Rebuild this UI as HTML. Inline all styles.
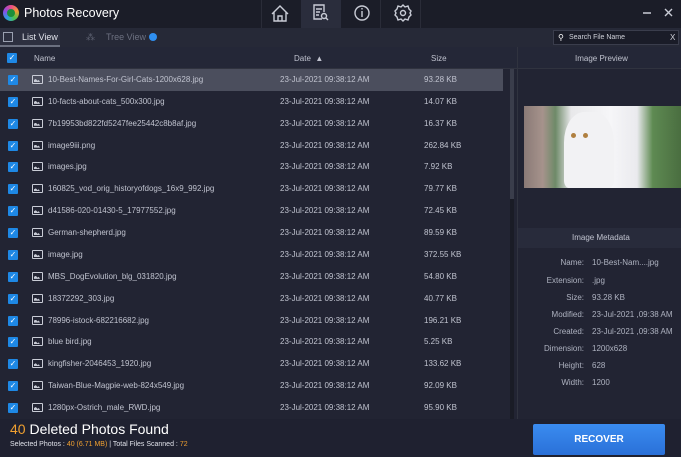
<!DOCTYPE html><html><head><style>
*{margin:0;padding:0;box-sizing:border-box}
body{width:681px;height:457px;overflow:hidden;background:#222433;font-family:"Liberation Sans",sans-serif;font-size:8px;color:#b9bcc8;position:relative}
.a{position:absolute}
.cb{position:absolute;width:10px;height:10px;background:#1e88e5;border-radius:1px;color:#fff;font-size:8px;line-height:10px;text-align:center}
.ic{position:absolute;width:11px;height:9px;border:1.3px solid #c9ccd6;border-radius:1px}
.ic:after{content:"";position:absolute;left:1px;bottom:1px;width:6px;height:3px;background:#c9ccd6;clip-path:polygon(0 100%,0 30%,30% 0,60% 60%,80% 30%,100% 100%)}
.row{position:absolute;left:0;width:505px;height:22px;line-height:22px}
.ml{position:absolute;width:84px;text-align:right;left:500px;color:#aeb2c0}
.mv{position:absolute;left:592px;color:#aeb2c0}
</style></head><body>
<div class="a" style="left:0;top:0;width:681px;height:28px;background:#1b1d28"></div>
<div class="a" style="left:3px;top:5px;width:16px;height:16px;border-radius:50%;background:conic-gradient(#e84a8a,#f39c33,#4cc44c,#2aa0e0,#8a4ce8,#e84a8a)"></div>
<div class="a" style="left:7px;top:9px;width:8px;height:8px;border-radius:50%;background:#1b8f3a"></div>
<div class="a" style="left:24px;top:6px;font-size:12.5px;color:#fff">Photos Recovery</div>
<div class="a" style="left:261px;top:0;width:40px;height:28px;border-left:1px solid #2a2c38"></div>
<div class="a" style="left:301px;top:0;width:40px;height:28px;background:#2a2d3c"></div>
<div class="a" style="left:341px;top:0;width:40px;height:28px;border-right:1px solid #2a2c38"></div>
<div class="a" style="left:381px;top:0;width:40px;height:28px;border-right:1px solid #2a2c38"></div>
<svg class="a" style="left:0;top:0" width="681" height="28" fill="none" stroke="#c9ccd6" stroke-width="1.4">
<path d="M272 14 L280 6 L288 14 M274 12 V21 H286 V12 M278 21 V16 H282 V21"/>
<path d="M322 19 H314 V5 H324 V12 M316 9 H322 M316 12 H320 M316 15 H319"/><circle cx="324" cy="16" r="2.5"/><path d="M326 18 L328 20"/>
<circle cx="362" cy="13" r="7"/><path d="M362 11 V17 M362 8 V9.5"/>
<circle cx="403" cy="13" r="2.5"/><path d="M403 5 L405 7 L408 6 L409 9 L411 11 L410 13 L411 15 L409 17 L408 20 L405 19 L403 21 L401 19 L398 20 L397 17 L395 15 L396 13 L395 11 L397 9 L398 6 L401 7 Z"/>
<path d="M643 13 H651 M665 9 L672 16 M672 9 L665 16"/>
</svg>
<div class="a" style="left:0;top:28px;width:681px;height:19px;background:#262937"></div>
<div class="a" style="left:0;top:28px;width:60px;height:19px;background:#2d3040;border-bottom:2px solid #6b7080"></div>
<div class="a" style="left:3px;top:32px;width:10px;height:10px;border:1.3px solid #9aa0b0"></div>
<div class="a" style="left:22px;top:32px;font-size:9px;color:#e0e2ea">List View</div>
<div class="a" style="left:86px;top:32px;font-size:9px;color:#5c6070">⁂</div>
<div class="a" style="left:106px;top:32px;font-size:9px;color:#6c7080">Tree View</div>
<div class="a" style="left:149px;top:33px;width:8px;height:8px;border-radius:50%;background:#2f8ff0"></div>
<div class="a" style="left:553px;top:30px;width:126px;height:15px;background:#1a1c28;border:1px solid #3a3d4c"></div>
<div class="a" style="left:558px;top:33px;font-size:8px;color:#fff">⚲</div>
<div class="a" style="left:569px;top:34px;font-size:7px;color:#d0d2da">Search File Name</div>
<div class="a" style="left:670px;top:33px;font-size:8px;color:#d0d2da">X</div>
<div class="a" style="left:0;top:47px;width:681px;height:22px;background:#242737;border-bottom:1px solid #30333f"></div>
<div class="cb" style="left:7px;top:53px">✓</div>
<div class="a" style="left:34px;top:54px;color:#c0c3cf">Name</div>
<div class="a" style="left:294px;top:54px;color:#c0c3cf">Date &nbsp;▲</div>
<div class="a" style="left:431px;top:54px;color:#c0c3cf">Size</div>
<div class="a" style="left:517px;top:47px;width:1px;height:372px;background:#30333f"></div>
<div class="a" style="left:575px;top:54px;color:#c0c3cf">Image Preview</div>
<div class="a" style="left:510px;top:69px;width:4px;height:350px;background:#1a1c26"></div>
<div class="a" style="left:510px;top:69px;width:4px;height:130px;background:#3a3d4b"></div>
<div class="a" style="left:524px;top:106px;width:157px;height:82px;background:linear-gradient(90deg,#8a7a76 0%,#a6938c 12%,#6e8a68 20%,#e8e8ea 30%,#f6f6f8 55%,#eaeaee 72%,#5e8a52 82%,#4a6e40 100%)"></div>
<div class="a" style="left:564px;top:112px;width:50px;height:76px;background:#f2f2f4;border-radius:40% 40% 10% 10%"></div>
<div class="a" style="left:571px;top:133px;width:5px;height:5px;border-radius:50%;background:#b08040"></div>
<div class="a" style="left:583px;top:133px;width:5px;height:5px;border-radius:50%;background:#b08040"></div>
<div class="a" style="left:518px;top:228px;width:163px;height:20px;background:#282b3b"></div>
<div class="a" style="left:572px;top:233px;color:#c0c3cf">Image Metadata</div>
<div class="ml" style="top:258px">Name:</div><div class="mv" style="top:258px">10-Best-Nam....jpg</div>
<div class="ml" style="top:276px">Extension:</div><div class="mv" style="top:276px">.jpg</div>
<div class="ml" style="top:293px">Size:</div><div class="mv" style="top:293px">93.28 KB</div>
<div class="ml" style="top:310px">Modified:</div><div class="mv" style="top:310px">23-Jul-2021 ,09:38 AM</div>
<div class="ml" style="top:327px">Created:</div><div class="mv" style="top:327px">23-Jul-2021 ,09:38 AM</div>
<div class="ml" style="top:344px">Dimension:</div><div class="mv" style="top:344px">1200x628</div>
<div class="ml" style="top:361px">Height:</div><div class="mv" style="top:361px">628</div>
<div class="ml" style="top:378px">Width:</div><div class="mv" style="top:378px">1200</div>
<div id="rows"></div>
<div class="a" style="left:0;top:419px;width:681px;height:38px;background:#1f2130"></div>
<div class="a" style="left:10px;top:421px;font-size:14px;color:#fff"><span style="color:#f0a030">40</span> Deleted Photos Found</div>
<div class="a" style="left:10px;top:441px;font-size:7px;color:#e0e2ea">Selected Photos : <span style="color:#f0a030">40 (6.71 MB)</span> | Total Files Scanned : <span style="color:#f0a030">72</span></div>
<div class="a" style="left:533px;top:424px;width:132px;height:31px;background:linear-gradient(#3a8cf0,#2a70d8);border-radius:2px;color:#fff;font-size:10px;font-weight:bold;text-align:center;line-height:31px">RECOVER</div>
<script>
var n=["10-Best-Names-For-Girl-Cats-1200x628.jpg","10-facts-about-cats_500x300.jpg","7b19953bd822fd5247fee25442c8b8af.jpg","image9iii.png","images.jpg","160825_vod_orig_historyofdogs_16x9_992.jpg","d41586-020-01430-5_17977552.jpg","German-shepherd.jpg","image.jpg","MBS_DogEvolution_blg_031820.jpg","18372292_303.jpg","78996-istock-682216682.jpg","blue bird.jpg","kingfisher-2046453_1920.jpg","Taiwan-Blue-Magpie-web-824x549.jpg","1280px-Ostrich_male_RWD.jpg"];
var s=["93.28 KB","14.07 KB","16.37 KB","262.84 KB","7.92 KB","79.77 KB","72.45 KB","89.59 KB","372.55 KB","54.80 KB","40.77 KB","196.21 KB","5.25 KB","133.62 KB","92.09 KB","95.90 KB"];
var h="";for(var i=0;i<16;i++){var t=69+i*21.87;
h+='<div class="row" style="top:'+t+'px;'+(i==0?'background:#4b4e5d;width:503px':'')+'"><div class="cb" style="left:8px;top:6px">✓</div><div class="ic" style="left:32px;top:6px"></div><span class="a" style="left:48px;color:#c0c3cf">'+n[i]+'</span><span class="a" style="left:280px;color:#c0c3cf">23-Jul-2021 09:38:12 AM</span><span class="a" style="left:424px;color:#c0c3cf">'+s[i]+'</span></div>';}
document.getElementById("rows").innerHTML=h;
</script>
</body></html>
